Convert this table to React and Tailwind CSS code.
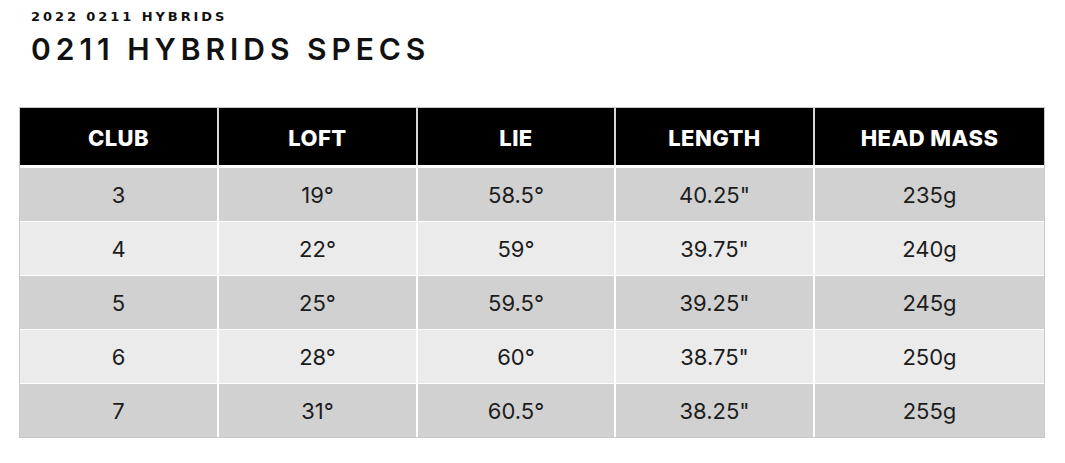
import React from "react";

const rows = [
  ["3", "19°", "58.5°", '40.25"', "235g"],
  ["4", "22°", "59°", '39.75"', "240g"],
  ["5", "25°", "59.5°", '39.25"', "245g"],
  ["6", "28°", "60°", '38.75"', "250g"],
  ["7", "31°", "60.5°", '38.25"', "255g"],
];
const heads = ["CLUB", "LOFT", "LIE", "LENGTH", "HEAD MASS"];

export default function App() {
  return (
    <div className="w-[1065px] h-[463px] bg-white overflow-hidden">
      <div className="pl-[31px] pt-[9px]">
        <div
          className="text-[13px] leading-[16px] font-bold tracking-[0.225em] text-[#111]"
          style={{ fontFamily: '"DejaVu Sans", sans-serif' }}
        >
          2022 0211 HYBRIDS
        </div>
        <div
          className="mt-[6px] text-[30px] leading-[36px] font-semibold tracking-[0.165em] text-[#111]"
          style={{ fontFamily: '"Inter", sans-serif' }}
        >
          0211 HYBRIDS SPECS
        </div>
      </div>
      <div
        className="ml-[20px] mt-[41px] w-[1024px] outline outline-1 outline-[#c8c8c8]"
        style={{ fontFamily: '"Inter", sans-serif' }}
      >
        <div className="grid grid-cols-[197px_197px_196px_197px_229px] gap-x-[2px] bg-[#d8d8d8] h-[57px]">
          {heads.map((h) => (
            <div
              key={h}
              className="bg-black text-white flex items-center justify-center pt-[4px] text-[22px] font-extrabold tracking-[0.02em]"
            >
              {h}
            </div>
          ))}
        </div>
        <div className="mt-[3px] flex flex-col gap-y-px bg-white">
          {rows.map((r, i) => (
            <div
              key={i}
              className="grid grid-cols-[197px_197px_196px_197px_229px] gap-x-[2px] h-[53px]"
            >
              {r.map((c, j) => (
                <div
                  key={j}
                  className={`flex items-center justify-center pt-[2px] text-[22px] text-[#1c1c1c] ${
                    i % 2 === 0 ? "bg-[#d1d1d1]" : "bg-[#ebebeb]"
                  }`}
                >
                  {c}
                </div>
              ))}
            </div>
          ))}
        </div>
      </div>
    </div>
  );
}
